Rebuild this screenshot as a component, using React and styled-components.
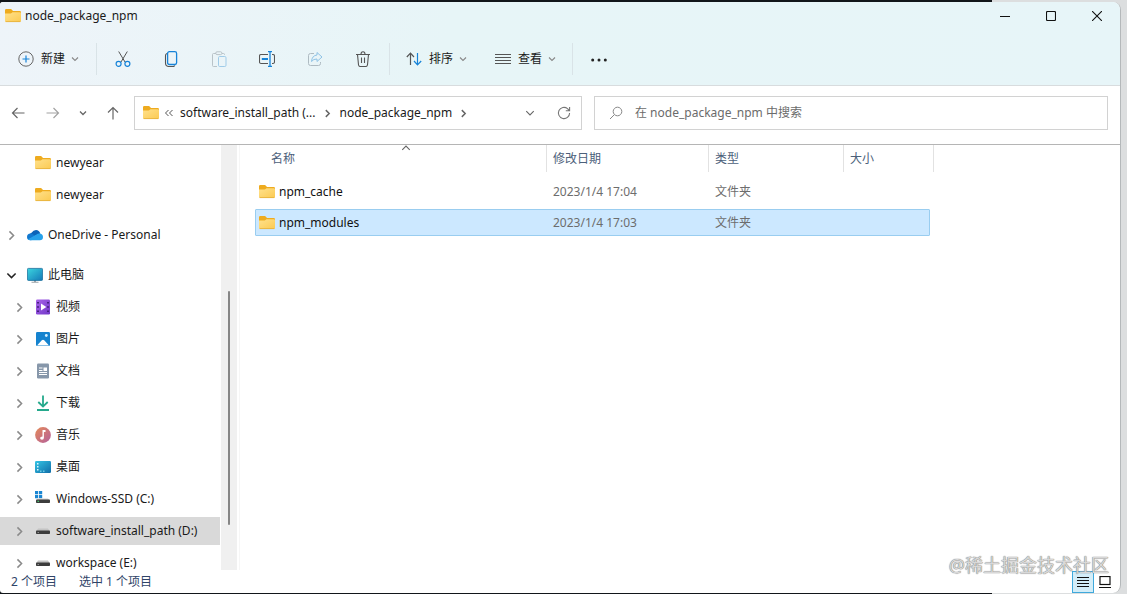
import styled, { createGlobalStyle } from "styled-components"
import { useState } from "react"

const GlobalStyle = createGlobalStyle`
  * {
    box-sizing: border-box;
  }
  body {
    margin: 0;
    font: 12px/16px "Noto Sans", "Noto Sans CJK SC", sans-serif;
    color: #1a1a1a;
  }
  button, input {
    font: inherit;
    color: inherit;
    background: none;
    border: 0;
    padding: 0;
  }
  ul {
    list-style: none;
    margin: 0;
    padding: 0;
  }
  svg {
    display: block;
    flex: none;
  }
`

const Desktop = styled.div`
  height: 100vh;
  padding: 2px 6px 1px 0;
  background: linear-gradient(90deg, #12161a 0 88%, #dcdedf 88%);
  position: relative;
`

const Window = styled.main`
  height: 100%;
  display: flex;
  flex-direction: column;
  background: #fff;
  border-right: 1px solid #b4b8ba;
  border-radius: 3px 8px 8px 3px;
  overflow: hidden;
`

const Chrome = styled.header`
  background: linear-gradient(100deg, #eef4f9 0, #e7f5f7 40%, #e7f5f8 100%);
  border-bottom: 1px solid #d8dcde;
`

const TitleBar = styled.div`
  height: 32px;
  padding-left: 5px;
  display: flex;
  align-items: flex-start;
  justify-content: space-between;
`

const Title = styled.h1`
  margin: 0;
  height: 28px;
  display: flex;
  align-items: center;
  gap: 4px;
  font-size: 12px;
  font-weight: 400;
`

const WindowButtons = styled.div`
  display: flex;
  button {
    width: 46px;
    height: 28px;
    display: grid;
    place-items: center;
  }
`

const Toolbar = styled.div`
  height: 51px;
  padding: 0 0 1px 4px;
  display: flex;
  align-items: center;
`

const Separator = styled.span`
  width: 1px;
  height: 32px;
  margin: 0 2px;
  background: #d9e3e7;
`

const ToolButton = styled.button`
  width: 48px;
  height: 36px;
  display: grid;
  place-items: center;
`

const MenuButton = styled.button`
  height: 36px;
  padding: 0 ${({ $primary }) => ($primary ? 15 : 14)}px 0 14px;
  display: flex;
  align-items: center;
  white-space: nowrap;
  span {
    margin: 0 6px 0 7px;
  }
`

const NavBar = styled.nav`
  padding: 10px 12px 14px 0;
  display: flex;
  align-items: center;
  border-bottom: 1px solid #b5b5b5;
`

const NavButtons = styled.div`
  padding-left: 5px;
  display: flex;
  gap: 9px;
`

const NavButton = styled.button`
  width: ${({ $small }) => ($small ? 16 : 26)}px;
  height: 24px;
  display: grid;
  place-items: center;
`

const Field = styled.div`
  flex: ${({ $grow }) => $grow} 1 0;
  min-width: 0;
  height: 34px;
  display: flex;
  align-items: center;
  border: 1px solid #d2d2d2;
`

const Address = styled(Field)`
  margin-left: 8px;
  padding: 0 4px 0 8px;
  white-space: nowrap;
`

const Back = styled.span`
  margin-left: 5px;
`

const Crumb = styled.a`
  color: inherit;
  text-decoration: none;
  margin-left: ${({ $first }) => ($first ? 6 : 8)}px;
  margin-right: 7px;
`

const AddressButtons = styled.div`
  margin-left: auto;
  display: flex;
  gap: 8px;
`

const Search = styled(Field)`
  margin-left: 12px;
  padding: 0 14px;
  gap: 12px;
  color: #6b6b6b;
  input {
    flex: 1;
    min-width: 0;
    outline: 0;
  }
  input::placeholder {
    color: #6b6b6b;
    opacity: 1;
  }
`

const Body = styled.div`
  flex: 1;
  min-height: 0;
  display: flex;
`

const Sidebar = styled.aside`
  width: 220px;
  padding-top: 4px;
  overflow: hidden;
`

const Tree = styled.ul`
  display: flex;
  flex-direction: column;
  gap: 4px;
  & + & {
    margin-top: 12px;
  }
`

const TreeRow = styled.button`
  width: 100%;
  height: 28px;
  padding-left: ${({ $level }) => ($level ? 13 : 5)}px;
  display: flex;
  align-items: center;
  text-align: left;
  white-space: nowrap;
  background: ${({ $active }) => ($active ? "#d9d9d9" : "transparent")};
`

const TreeArrow = styled.span`
  width: 13px;
  height: 13px;
  margin-right: 9px;
  display: grid;
  place-items: center;
`

const TreeLabel = styled.span`
  margin-left: 5px;
`

const Scrollbar = styled.div`
  width: 16px;
  margin-left: 1px;
  padding-top: 146px;
  background: #f0f0f0;
`

const Thumb = styled.div`
  width: 2px;
  height: 84%;
  max-height: 235px;
  margin: 0 auto;
  border-radius: 1px;
  background: #868686;
`

const Content = styled.section`
  flex: 1;
  min-width: 0;
  margin-left: 2px;
  padding-left: 15px;
  border-left: 1px solid #f6f6f6;
`

const FileTable = styled.table`
  display: block;
  tr {
    display: grid;
    grid-template-columns: 292px 162px 135px 1fr;
    align-items: center;
  }
  thead, tbody {
    display: block;
    width: 679px;
  }
  tbody {
    padding: 6px 4px 0 0;
  }
`

const HeadCell = styled.th`
  height: 27px;
  padding: 0 0 0 ${({ $name }) => ($name ? 16 : 6)}px;
  position: relative;
  font-weight: 400;
  line-height: 27px;
  text-align: left;
  color: #4c607a;
  border-right: 1px solid #e2e2e2;
`

const SortMark = styled.span`
  position: absolute;
  top: -2px;
  left: 146px;
`

const FileRow = styled.tr`
  height: 27px;
  margin-bottom: 4px;
  border: 1px solid ${({ $selected }) => ($selected ? "#99cdf0" : "transparent")};
  border-radius: 1px;
  background: ${({ $selected }) => ($selected ? "#cce8ff" : "transparent")};
  td {
    padding: 0 0 0 5px;
    color: #6d6d6d;
  }
  td:first-child {
    padding-left: 3px;
    display: flex;
    align-items: center;
    gap: 4px;
    color: #111;
  }
`

const StatusBar = styled.footer`
  height: 23px;
  padding: 0 4px 0 11px;
  display: flex;
  align-items: center;
  gap: 22px;
  color: #2f4468;
`

const ViewSwitch = styled.div`
  margin-left: auto;
  display: flex;
`

const ViewButton = styled.button`
  width: 22px;
  height: 22px;
  display: grid;
  place-items: center;
  border: 1px solid ${({ $on }) => ($on ? "#3fa9dc" : "transparent")};
  background: ${({ $on }) => ($on ? "#d3edf8" : "transparent")};
`

const Watermark = styled.div`
  position: absolute;
  right: 18px;
  bottom: 17px;
  font-size: 18px;
  line-height: 24px;
  color: #d8d8d8;
  text-shadow: 0 0 1px #777, 0 0 1px #888;
  pointer-events: none;
`

const Svg = ({ w = 16, h = w, children, ...rest }) => (
  <svg width={w} height={h} viewBox={`0 0 ${w} ${h}`} fill='none' stroke='#555' aria-hidden='true' {...rest}>
    {children}
  </svg>
)

const Folder = () => (
  <Svg stroke='none'>
    <defs>
      <linearGradient id='folder' x1='0' y1='0' x2='1' y2='1'>
        <stop offset='0' stopColor='#ffe18c' />
        <stop offset='1' stopColor='#fbca52' />
      </linearGradient>
    </defs>
    <path d='M0 2.200Q0 1 1.200 1h4.600q.5 0 .9.400L8 3H14.800Q16 3 16 4.200V8H0Z' fill='#eeab1f' />
    <path d='M0 5.400h5.600q.6 0 1-.4l.8-.8h7.400q1.200 0 1.200 1v7.600q0 1.200-1.200 1.200H1.200Q0 14 0 12.800Z' fill='url(#folder)' />
    <path d='M.6 13.600h14.800' stroke='#e5ae38' strokeWidth='.8' />
  </Svg>
)

const Chevron = ({ dir = "down", size = 8, color = "#666", weight = 1.1 }) => {
  const turn = { down: 0, right: -90, up: 180 }[dir]
  return (
    <Svg w={size} stroke={color} strokeWidth={weight} viewBox='0 0 8 8'>
      <path d='M1 2.500 4 5.500l3-3' transform={`rotate(${turn} 4 4)`} />
    </Svg>
  )
}

const icons = {
  cut: (
    <Svg>
      <path d='M3.700.5 10 11M12.300.5 6 11' />
      <circle cx='3.600' cy='12.800' r='2.500' stroke='#1683d8' strokeWidth='1.200' />
      <circle cx='12.400' cy='12.800' r='2.500' stroke='#1683d8' strokeWidth='1.200' />
    </Svg>
  ),
  copy: (
    <Svg>
      <path d='M4 2.500Q2.500 3 2.500 4.500V12q0 3.500 3.500 3.500h4q1.300 0 2-1' strokeWidth='1.100' />
      <rect x='4.600' y='.7' width='9' height='12.800' rx='1.800' stroke='#1683d8' strokeWidth='1.300' />
    </Svg>
  ),
  paste: (
    <Svg stroke='#b9c3c8'>
      <path d='M5 2.500H2.500q-1 0-1 1v11q0 1 1 1H6M11 2.500h1.500q1 0 1 1V4' />
      <rect x='4.800' y='.8' width='6' height='2.800' rx='1.200' />
      <rect x='7.500' y='5.500' width='7.500' height='10' rx='1.200' stroke='#9fcbe8' />
    </Svg>
  ),
  rename: (
    <Svg>
      <path d='M9 3.500H2q-1.500 0-1.500 1.500v6q0 1.500 1.500 1.500h7M13 3.500h1q1.500 0 1.500 1.500v6q0 1.500-1.500 1.500h-1' strokeWidth='1.100' />
      <path d='M9 .6h4M9 15.400h4M11 .6v14.800' stroke='#1683d8' strokeWidth='1.300' />
      <path d='M2.800 8H9' stroke='#1683d8' strokeWidth='2' />
    </Svg>
  ),
  share: (
    <Svg stroke='#aebbc2'>
      <path d='M7 2.500H3.500q-2 0-2 2v8q0 2 2 2h8q2 0 2-2V11' />
      <path d='M10 1.500 15 6l-5 4.500V8Q6.500 7.800 4.500 10.500 5 4.500 10 4Z' stroke='#8fc3e6' strokeLinejoin='round' />
    </Svg>
  ),
  trash: (
    <Svg strokeWidth='1.100'>
      <path d='M1 3.500h14M2.500 3.500l1 10.300q.2 1.700 1.800 1.700h5.400q1.600 0 1.800-1.700l1-10.300M6 3.300Q6 .8 8 .8t2 2.500M6.500 6.500v5.500M9.500 6.500v5.500' />
    </Svg>
  ),
  plus: (
    <Svg stroke='#666'>
      <circle cx='8' cy='8' r='7.200' />
      <path d='M8 4.500v7M4.500 8h7' stroke='#1683d8' strokeWidth='1.200' />
    </Svg>
  ),
  sort: (
    <Svg strokeWidth='1.200'>
      <path d='M4.500 14V2M.8 6 4.500 2.200 8 6' />
      <path d='M11.500 2v12M8 10l3.500 3.800L15.200 10' stroke='#1683d8' />
    </Svg>
  ),
  view: (
    <Svg>
      <path d='M0 3.500h16M0 6.500h16M0 9.500h16M0 12.500h16' />
    </Svg>
  ),
  more: (
    <Svg stroke='none' fill='#222'>
      <circle cx='1.700' cy='9' r='1.500' />
      <circle cx='8' cy='9' r='1.500' />
      <circle cx='14.300' cy='9' r='1.500' />
    </Svg>
  ),
  oneDrive: (
    <Svg stroke='none'>
      <path d='M2.500 9Q2.500 6.500 4.800 5.600 6.200 3 9 3q3.200 0 4.300 3.500L7 9.500Z' fill='#0b63b8' />
      <path d='M0 10q0-3.200 3.500-3.400Q5 6.500 6.300 7.400L11 12l-7.400 1.300Q0 13.200 0 10Z' fill='#1278cf' />
      <path d='M3.400 13.300Q1.800 13.200 1 12.200L9.500 7.500Q11 6.200 13 6.500q3 .6 3 3.500 0 3.200-3.200 3.300Z' fill='#26a1ea' />
    </Svg>
  ),
  pc: (
    <Svg stroke='none'>
      <defs>
        <linearGradient id='screen' x1='0' y1='0' x2='1' y2='1'>
          <stop offset='0' stopColor='#3bd5df' />
          <stop offset='1' stopColor='#1479b8' />
        </linearGradient>
      </defs>
      <path d='M7 13h2v1.800h2.500v.9h-7v-.9H7Z' fill='#9aa2a8' />
      <rect x='.4' y='1.400' width='15.200' height='12' rx='1' fill='url(#screen)' stroke='#1b6f9c' strokeWidth='.8' />
    </Svg>
  ),
  video: (
    <Svg stroke='none'>
      <defs>
        <linearGradient id='video' x1='0' y1='0' x2='1' y2='1'>
          <stop offset='0' stopColor='#a862e8' />
          <stop offset='1' stopColor='#7238c8' />
        </linearGradient>
      </defs>
      <rect x='1' y='.5' width='14' height='15' rx='1.200' fill='url(#video)' />
      <path d='M2 3h2v1.600H2ZM2 7.200h2v1.600H2ZM2 11.400h2V13H2ZM12 3h2v1.600h-2ZM12 7.200h2v1.600h-2ZM12 11.400h2V13h-2Z' fill='#46207f' />
      <path d='M6 4.500 11.300 8 6 11.500Z' fill='#fff' />
    </Svg>
  ),
  picture: (
    <Svg stroke='none'>
      <rect x='1' y='1' width='14' height='14' rx='1.200' fill='#1583cf' />
      <path d='M2 14.500l4.800-5.200q1.200-1.300 2.400 0L14 14.500Z' fill='#fff' />
      <circle cx='11.300' cy='4.500' r='1.400' fill='#d6f0ff' />
    </Svg>
  ),
  doc: (
    <Svg stroke='none'>
      <rect x='2' y='.5' width='12' height='15' rx='1.200' fill='#8797aa' />
      <path d='M4 5h3.500M4 7.500h3.500M4 9.500h8M4 11.500h8' stroke='#fff' />
      <rect x='8.500' y='4.500' width='3.500' height='3.500' fill='#fff' />
    </Svg>
  ),
  download: (
    <Svg stroke='#25a98c' strokeWidth='1.800'>
      <path d='M8 .5v11M3.300 7 8 11.600 12.700 7M2 15h12' />
    </Svg>
  ),
  music: (
    <Svg stroke='none'>
      <defs>
        <linearGradient id='music' x1='0' y1='0' x2='1' y2='1'>
          <stop offset='0' stopColor='#e58a58' />
          <stop offset='1' stopColor='#b4609c' />
        </linearGradient>
      </defs>
      <circle cx='8' cy='8' r='7.900' fill='url(#music)' />
      <path d='M7.500 3h3v2H8.900v5.800q0 2-1.900 2t-1.900-1.700q0-1.600 2.400-1.600Z' fill='#fff' />
    </Svg>
  ),
  desktop: (
    <Svg stroke='none'>
      <defs>
        <linearGradient id='desk' x1='0' y1='0' x2='1' y2='1'>
          <stop offset='0' stopColor='#34c4e4' />
          <stop offset='1' stopColor='#116da8' />
        </linearGradient>
      </defs>
      <rect y='2' width='16' height='12' rx='1.200' fill='url(#desk)' />
      <path d='M2 4h1.500v1.500H2ZM2 7h1.500v1.500H2ZM2 10h1.500v1.500H2Z' fill='#d9f6fc' />
      <path d='M5 11.500h1.500V13H5ZM8 11.500h1.500V13H8Z' fill='#6cc9e6' />
    </Svg>
  ),
  system: (
    <Svg stroke='none'>
      <path d='M0 0h3.200v3.200H0ZM4 0h3.200v3.200H4ZM0 4h3.200v3.200H0ZM4 4h3.200v3.200H4Z' fill='#1a86d2' />
      <path d='M3 7.500h10l1.500 2H1.500Z' fill='#d0d0d0' />
      <rect x='1' y='8.500' width='14' height='3.500' rx='.8' fill='#3c3c3c' />
      <path d='M2.500 10.300h1.500' stroke='#45e07a' />
    </Svg>
  ),
  drive: (
    <Svg stroke='none'>
      <path d='M3 5.500h10l1.700 2.500H1.300Z' fill='#c4c4c4' />
      <rect x='1' y='7.500' width='14' height='3.500' rx='.8' fill='#3c3c3c' />
      <path d='M2.500 9.500h1.500' stroke='#8d8d8d' />
    </Svg>
  ),
  folder: <Folder />,
}

const tree = [
  [
    { label: "newyear", icon: "folder", level: 1, leaf: true },
    { label: "newyear", icon: "folder", level: 1, leaf: true },
  ],
  [{ label: "OneDrive - Personal", icon: "oneDrive" }],
  [
    { label: "此电脑", icon: "pc", open: true },
    { label: "视频", icon: "video", level: 1 },
    { label: "图片", icon: "picture", level: 1 },
    { label: "文档", icon: "doc", level: 1 },
    { label: "下载", icon: "download", level: 1 },
    { label: "音乐", icon: "music", level: 1 },
    { label: "桌面", icon: "desktop", level: 1 },
    { label: "Windows-SSD (C:)", icon: "system", level: 1 },
    { label: "software_install_path (D:)", icon: "drive", level: 1, active: true },
    { label: "workspace (E:)", icon: "drive", level: 1 },
  ],
]

const files = [
  { name: "npm_cache", date: "2023/1/4 17:04", type: "文件夹" },
  { name: "npm_modules", date: "2023/1/4 17:03", type: "文件夹" },
]

const tools = [
  ["cut", "剪切"],
  ["copy", "复制"],
  ["paste", "粘贴"],
  ["rename", "重命名"],
  ["share", "共享"],
  ["trash", "删除"],
]

const Menu = ({ icon, label, primary }) => (
  <MenuButton $primary={primary}>
    {icons[icon]}
    <span>{label}</span>
    <Chevron color='#888' />
  </MenuButton>
)

const App = () => {
  const [selected, setSelected] = useState("npm_modules")

  return (
    <Desktop>
      <GlobalStyle />
      <Window>
        <Chrome>
          <TitleBar>
            <Title>
              <Folder />
              node_package_npm
            </Title>
            <WindowButtons>
              <button aria-label='最小化'>
                <Svg w={10} stroke='#111'>
                  <path d='M0 5.500h10' />
                </Svg>
              </button>
              <button aria-label='最大化'>
                <Svg w={10} stroke='#111' strokeWidth='1.100'>
                  <rect x='.5' y='.5' width='9' height='9' rx='1' />
                </Svg>
              </button>
              <button aria-label='关闭'>
                <Svg w={10} stroke='#111' strokeWidth='1.100'>
                  <path d='M0 0l10 10M10 0 0 10' />
                </Svg>
              </button>
            </WindowButtons>
          </TitleBar>
          <Toolbar>
            <Menu icon='plus' label='新建' primary />
            <Separator />
            {tools.map(([icon, label]) => (
              <ToolButton key={icon} aria-label={label}>
                {icons[icon]}
              </ToolButton>
            ))}
            <Separator />
            <Menu icon='sort' label='排序' />
            <Menu icon='view' label='查看' />
            <Separator />
            <ToolButton aria-label='更多'>{icons.more}</ToolButton>
          </Toolbar>
        </Chrome>

        <NavBar>
          <NavButtons>
            <NavButton aria-label='后退'>
              <Svg w={14} stroke='#666' strokeWidth='1.200'>
                <path d='M13.500 7H1.500M6.500 2 1.500 7l5 5' />
              </Svg>
            </NavButton>
            <NavButton aria-label='前进'>
              <Svg w={14} stroke='#a2a2a2' strokeWidth='1.200'>
                <path d='M.5 7h12M7.500 2l5 5-5 5' />
              </Svg>
            </NavButton>
            <NavButton aria-label='最近' $small>
              <Chevron weight={1.3} />
            </NavButton>
            <NavButton aria-label='向上'>
              <Svg w={14} stroke='#666' strokeWidth='1.200'>
                <path d='M7 13.500v-12M2 6.500l5-5 5 5' />
              </Svg>
            </NavButton>
          </NavButtons>
          <Address $grow={434}>
            <Folder />
            <Back>
              <Svg w={10} h={8} stroke='#555'>
                <path d='M4.500 1 1.500 4l3 3M8.500 1l-3 3 3 3' />
              </Svg>
            </Back>
            <Crumb href='#path' $first>
              software_install_path (...
            </Crumb>
            <Chevron dir='right' size={9} weight={1.3} />
            <Crumb href='#npm'>node_package_npm</Crumb>
            <Chevron dir='right' size={9} weight={1.3} />
            <AddressButtons>
              <NavButton aria-label='展开'>
                <Chevron size={10} weight={0.9} />
              </NavButton>
              <NavButton aria-label='刷新'>
                <Svg w={14} stroke='#777' strokeWidth='1.100'>
                  <path d='M12.600 7A5.600 5.600 0 1 1 10.500 2.600L12.300 4.500M12.600 1v3.800H8.800' />
                </Svg>
              </NavButton>
            </AddressButtons>
          </Address>
          <Search as='label' $grow={484}>
            <Svg w={14} stroke='#888'>
              <circle cx='8.500' cy='5.500' r='4.300' />
              <path d='M5.300 8.700 1 13' />
            </Svg>
            <input type='search' aria-label='搜索' placeholder='在 node_package_npm 中搜索' />
          </Search>
        </NavBar>

        <Body>
          <Sidebar>
            {tree.map((group, i) => (
              <Tree key={i}>
                {group.map((item, j) => (
                  <li key={j}>
                    <TreeRow $level={item.level} $active={item.active}>
                      <TreeArrow>
                        {!item.leaf && (
                          <Chevron
                            dir={item.open ? "down" : "right"}
                            size={11}
                            weight={1.1}
                            color={item.open ? "#222" : "#8a8a8a"}
                          />
                        )}
                      </TreeArrow>
                      {icons[item.icon]}
                      <TreeLabel>{item.label}</TreeLabel>
                    </TreeRow>
                  </li>
                ))}
              </Tree>
            ))}
          </Sidebar>
          <Scrollbar>
            <Thumb />
          </Scrollbar>
          <Content>
            <FileTable>
              <thead>
                <tr>
                  <HeadCell $name>
                    名称
                    <SortMark>
                      <Chevron dir='up' size={10} weight={0.9} />
                    </SortMark>
                  </HeadCell>
                  <HeadCell>修改日期</HeadCell>
                  <HeadCell>类型</HeadCell>
                  <HeadCell>大小</HeadCell>
                </tr>
              </thead>
              <tbody>
                {files.map(({ name, date, type }) => (
                  <FileRow key={name} $selected={name === selected} onClick={() => setSelected(name)}>
                    <td>
                      <Folder />
                      {name}
                    </td>
                    <td>{date}</td>
                    <td>{type}</td>
                    <td />
                  </FileRow>
                ))}
              </tbody>
            </FileTable>
          </Content>
        </Body>

        <StatusBar>
          <span>2 个项目</span>
          <span>选中 1 个项目</span>
          <ViewSwitch>
            <ViewButton $on aria-label='详细信息'>
              <Svg w={12} stroke='#111'>
                <path d='M0 1.500h12M0 4.500h12M0 7.500h12M0 10.500h12' />
              </Svg>
            </ViewButton>
            <ViewButton aria-label='大图标'>
              <Svg w={12} stroke='#111'>
                <rect x='1' y='.5' width='10' height='8' strokeWidth='1.200' />
                <path d='M0 11.500h12' />
              </Svg>
            </ViewButton>
          </ViewSwitch>
        </StatusBar>
      </Window>
      <Watermark>@稀土掘金技术社区</Watermark>
    </Desktop>
  )
}

export default App
